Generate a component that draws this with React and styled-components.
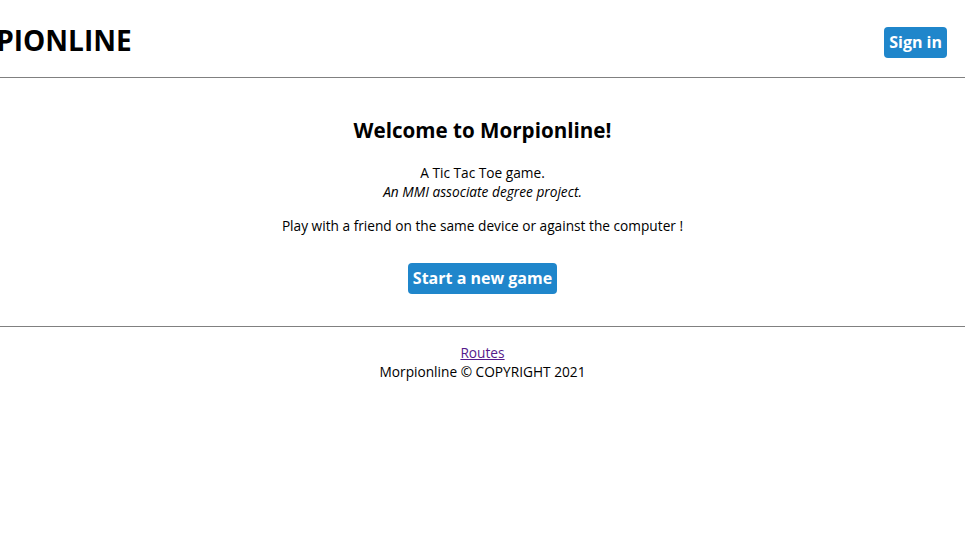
import * as React from "react";
import styled, { createGlobalStyle } from "styled-components";

const GlobalStyle = createGlobalStyle`
  html, body {
    margin: 0;
    padding: 0;
    background: #ffffff;
  }
  body {
    font-family: "Open Sans", "Noto Sans", sans-serif;
    color: #000000;
    overflow-x: hidden;
  }
`;

const App = () => {
  return (
    <Page>
      <GlobalStyle />
      <Header>
        <Logo>MORPIONLINE</Logo>
        <Button>Sign in</Button>
      </Header>
      <Rule />
      <Main>
        <Title>Welcome to Morpionline!</Title>
        <Intro>
          A Tic Tac Toe game.
          <br />
          <em>An MMI associate degree project.</em>
        </Intro>
        <Text>Play with a friend on the same device or against the computer !</Text>
        <Button>Start a new game</Button>
      </Main>
      <Rule />
      <Footer>
        <FooterLink href="#routes">Routes</FooterLink>
        <span>Morpionline © COPYRIGHT 2021</span>
      </Footer>
    </Page>
  );
};

const Page = styled.div`
  width: 100%;
  overflow: hidden;
`;

const Header = styled.header`
  height: 69px;
  display: flex;
  flex-direction: row;
  align-items: center;
  justify-content: space-between;
  padding: 8px 18px 0 0;
`;

const Logo = styled.h1`
  margin: 0 0 0 -71px;
  font-size: 28px;
  font-weight: 700;
  line-height: 1;
  padding-bottom: 5px;
  white-space: nowrap;
`;

const Button = styled.button`
  display: inline-flex;
  align-items: center;
  height: 31px;
  border: none;
  border-radius: 4px;
  background: #1f86cb;
  color: #ffffff;
  font-family: inherit;
  font-size: 16px;
  font-weight: 700;
  padding: 0 5px 1px;
  line-height: 23px;
  cursor: pointer;
`;

const Rule = styled.hr`
  margin: 0;
  border: none;
  border-top: 1px solid #808080;
`;

const Main = styled.main`
  display: flex;
  flex-direction: column;
  align-items: center;
  padding: 38px 0 32px;
  font-size: 13.7px;
  line-height: 19px;
`;

const Title = styled.h2`
  margin: 0 0 19px;
  font-size: 20.6px;
  font-weight: 700;
  line-height: 28px;
`;

const Intro = styled.p`
  margin: 0;
  text-align: center;
`;

const Text = styled.p`
  margin: 15px 0 28px;
  text-align: center;
`;

const Footer = styled.footer`
  display: flex;
  flex-direction: column;
  align-items: center;
  padding-top: 16px;
  font-size: 13.7px;
  line-height: 19px;
`;

const FooterLink = styled.a`
  color: #551a8b;
  text-decoration: underline;
`;

export default App;
